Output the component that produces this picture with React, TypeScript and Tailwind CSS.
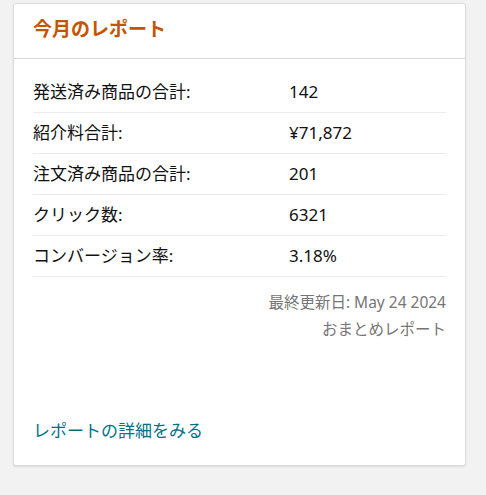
const rows = [
  { label: "発送済み商品の合計:", value: "142" },
  { label: "紹介料合計:", value: "¥71,872" },
  { label: "注文済み商品の合計:", value: "201" },
  { label: "クリック数:", value: "6321" },
  { label: "コンバージョン率:", value: "3.18%" },
];

export default function App() {
  return (
    <div
      className="min-h-[495px] bg-[#f2f2f2] pl-[13px] pr-[20px] pt-[3px] pb-[29px]"
      style={{ fontFamily: '"Noto Sans", "Noto Sans CJK JP", sans-serif' }}
    >
      <div className="flex h-[463px] flex-col rounded-[3px] border border-[#dddddd] bg-white shadow-[0_1px_2px_rgba(0,0,0,0.1)]">
        {/* header */}
        <div className="flex h-[55px] items-center border-b border-[#d5d9d9] px-[19px] pb-[4px]">
          <h2 className="text-[19px] font-bold text-[#c45500]">今月のレポート</h2>
        </div>

        {/* stats */}
        <div className="px-[19px] pt-[13px]">
          {rows.map((r) => (
            <div
              key={r.label}
              className="flex h-[41px] items-center border-b border-[#ececec] text-[17px] text-[#111111]"
            >
              <span className="w-[256px]">{r.label}</span>
              <span>{r.value}</span>
            </div>
          ))}
        </div>

        <div className="flex flex-col items-end px-[19px] pt-[12px] text-[15.5px] leading-[27px] text-[#767676]">
          <span>最終更新日: May 24 2024</span>
          <span>おまとめレポート</span>
        </div>

        <div className="mt-auto px-[19px] pb-[22px]">
          <a className="text-[17px] text-[#007185]" href="#">
            レポートの詳細をみる
          </a>
        </div>
      </div>
    </div>
  );
}
